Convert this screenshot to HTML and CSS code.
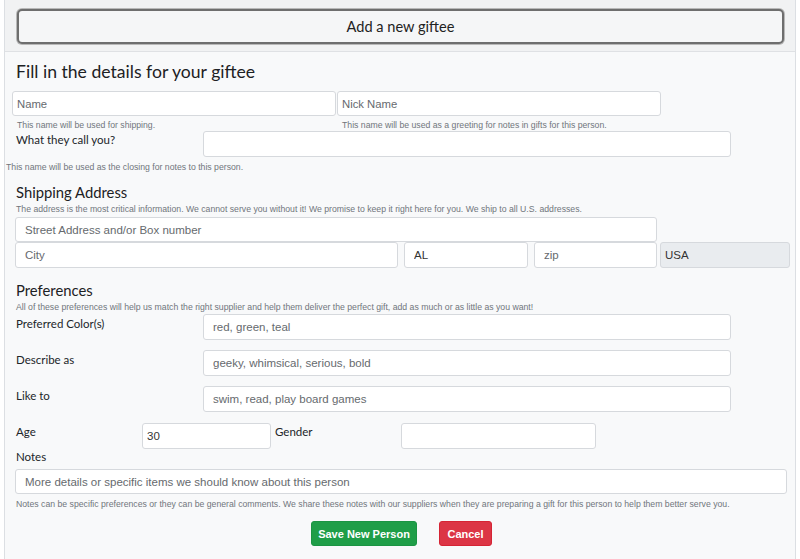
FILE: index.html
```html
<!DOCTYPE html>
<html>
<head>
<meta charset="utf-8">
<link rel="stylesheet" href="styles.css">
</head>
<body>
<div class="card">
  <div class="card-header">
    <button class="add-btn" type="button">Add a new giftee</button>
  </div>
  <div class="card-body">
    <h2 class="title">Fill in the details for your giftee</h2>
    <div class="name-row">
      <div class="name-col">
        <input class="field pad-s" placeholder="Name">
        <small class="help help-name">This name will be used for shipping.</small>
      </div>
      <div class="name-col">
        <input class="field pad-s" placeholder="Nick Name">
        <small class="help help-name">This name will be used as a greeting for notes in gifts for this person.</small>
      </div>
    </div>
    <div class="label-row call-row">
      <label class="lbl">What they call you?</label>
      <input class="field wide-field">
    </div>
    <small class="help closing">This name will be used as the closing for notes to this person.</small>

    <h3 class="section ship-title">Shipping Address</h3>
    <small class="help section-desc">The address is the most critical information. We cannot serve you without it! We promise to keep it right here for you. We ship to all U.S. addresses.</small>
    <input class="field pad-l street" placeholder="Street Address and/or Box number">
    <div class="addr-row">
      <input class="field pad-l city" placeholder="City">
      <input class="field pad-l state value" value="AL">
      <input class="field pad-l zip" placeholder="zip">
      <input class="field pad-s country value" value="USA" readonly>
    </div>

    <h3 class="section pref-title">Preferences</h3>
    <small class="help section-desc">All of these preferences will help us match the right supplier and help them deliver the perfect gift, add as much or as little as you want!</small>
    <div class="label-row pref-row first">
      <label class="lbl">Preferred Color(s)</label>
      <input class="field pad-l wide-field" placeholder="red, green, teal">
    </div>
    <div class="label-row pref-row">
      <label class="lbl">Describe as</label>
      <input class="field pad-l wide-field" placeholder="geeky, whimsical, serious, bold">
    </div>
    <div class="label-row pref-row">
      <label class="lbl">Like to</label>
      <input class="field pad-l wide-field" placeholder="swim, read, play board games">
    </div>
    <div class="label-row age-row">
      <label class="lbl age-lbl">Age</label>
      <input class="field pad-s age value" value="30">
      <label class="lbl gender-lbl">Gender</label>
      <input class="field gender">
    </div>
    <label class="lbl notes-lbl">Notes</label>
    <input class="field pad-l notes" placeholder="More details or specific items we should know about this person">
    <small class="help notes-help">Notes can be specific preferences or they can be general comments. We share these notes with our suppliers when they are preparing a gift for this person to help them better serve you.</small>
    <div class="actions">
      <button class="btn btn-save" type="button">Save New Person</button>
      <button class="btn btn-cancel" type="button">Cancel</button>
    </div>
  </div>
</div>
</body>
</html>
```

FILE: styles.css
```css
* { box-sizing: border-box; }
html, body { margin: 0; padding: 0; background: #ffffff; }
body {
  font-family: "Liberation Sans", Arial, sans-serif;
  color: #212529;
  height: 559px;
  overflow: hidden;
}
.card {
  margin: -1px 0 0 4px;
  width: 792px;
  height: 560px;
  border: 1px solid #dcdfe3;
  border-bottom: 0;
  background: #f8f9fa;
}
.card-header {
  background: #f1f2f3;
  border-bottom: 1px solid #dfe1e4;
  padding: 9px 11px 7px 12px;
}
.add-btn {
  display: block;
  width: 100%;
  height: 35px;
  border: 2px solid #6e6e6e;
  border-radius: 5px;
  background: #f5f6f7;
  box-shadow: 0 0 0 1px #b8b8b8;
  font-family: Lato, "Open Sans", sans-serif;
  font-size: 14.6px;
  color: #222;
  padding: 0;
}
.card-body {
  display: flex;
  flex-direction: column;
  align-items: flex-start;
  padding: 0;
}
.title {
  font-family: Lato, "Open Sans", sans-serif;
  font-weight: 400;
  font-size: 17.6px;
  line-height: 24px;
  margin: 8px 0 0 11px;
  color: #1d2124;
}
.field {
  display: block;
  height: 25px;
  border: 1px solid #d6d9dd;
  border-radius: 3px;
  background: #fff;
  font-family: "Liberation Sans", Arial, sans-serif;
  font-size: 11.3px;
  color: #555;
  outline: none;
  padding: 0 9px;
}
.field::placeholder { color: #666a6e; opacity: 1; }
.field.value { color: #333; }
.pad-s { padding: 0 4px; }
.pad-l { padding: 0 9px; font-size: 11.5px; }
.name-row {
  display: flex;
  margin: 7px 0 0 7px;
  gap: 1px;
}
.name-col { width: 324px; display: flex; flex-direction: column; }
.name-col .field { width: 324px; }
.help {
  display: block;
  font-size: 8.7px;
  line-height: 11px;
  color: #70767c;
  white-space: nowrap;
}
.help-name { margin: 4px 0 0 5px; }
.label-row {
  display: flex;
  align-items: flex-start;
}
.lbl {
  font-family: Lato, "Open Sans", sans-serif;
  font-size: 11.5px;
  line-height: 14px;
  color: #212529;
}
.call-row { margin: 0 0 0 11px; }
.call-row .lbl { width: 187px; margin-top: 2px; }
.wide-field { width: 528px; height: 26px; }
.closing { margin: 5px 0 0 1px; }
.section {
  font-family: Lato, "Open Sans", sans-serif;
  font-weight: 400;
  font-size: 14.8px;
  line-height: 18px;
  margin: 0 0 0 11px;
  color: #1d2124;
}
.ship-title { margin-top: 10px; }
.section-desc { margin: 3px 0 0 11px; }
.street { width: 642px; margin: 2px 0 0 10px; height: 25px; }
.addr-row { display: flex; margin: 0 0 0 10px; }
.city { width: 383px; height: 26px; }
.state { width: 124px; height: 26px; margin-left: 6px; }
.zip { width: 123px; height: 26px; margin-left: 6px; }
.country { width: 130px; height: 26px; margin-left: 3px; background: #e9ecef; font-size: 11.5px; }
.pref-title { margin-top: 13px; }
.pref-row { margin: 10px 0 0 11px; }
.pref-row.first { margin-top: 1px; }
.pref-row .lbl { width: 187px; margin-top: 3px; }
.age-row { margin: 11px 0 0 11px; }
.age-lbl { width: 126px; margin-top: 2px; }
.age { width: 129px; height: 26px; font-size: 11.5px; }
.gender-lbl { width: 126px; margin-left: 4px; margin-top: 2px; }
.gender { width: 195px; height: 26px; }
.notes-lbl { margin: 1px 0 0 11px; }
.notes { width: 772px; margin: 5px 0 0 10px; height: 25px; }
.notes-help { margin: 5px 0 0 11px; }
.actions {
  display: flex;
  gap: 22px;
  margin: 11px 0 0 306px;
}
.btn {
  height: 25px;
  border-radius: 3px;
  font-family: "Liberation Sans", Arial, sans-serif;
  font-weight: 700;
  font-size: 11px;
  color: #fff;
  padding: 0;
  white-space: nowrap;
}
.btn-save { background: #1f9e48; border: 1px solid #1b9443; width: 106px; }
.btn-cancel { background: #dc3545; border: 1px solid #d52434; width: 53px; }
```
